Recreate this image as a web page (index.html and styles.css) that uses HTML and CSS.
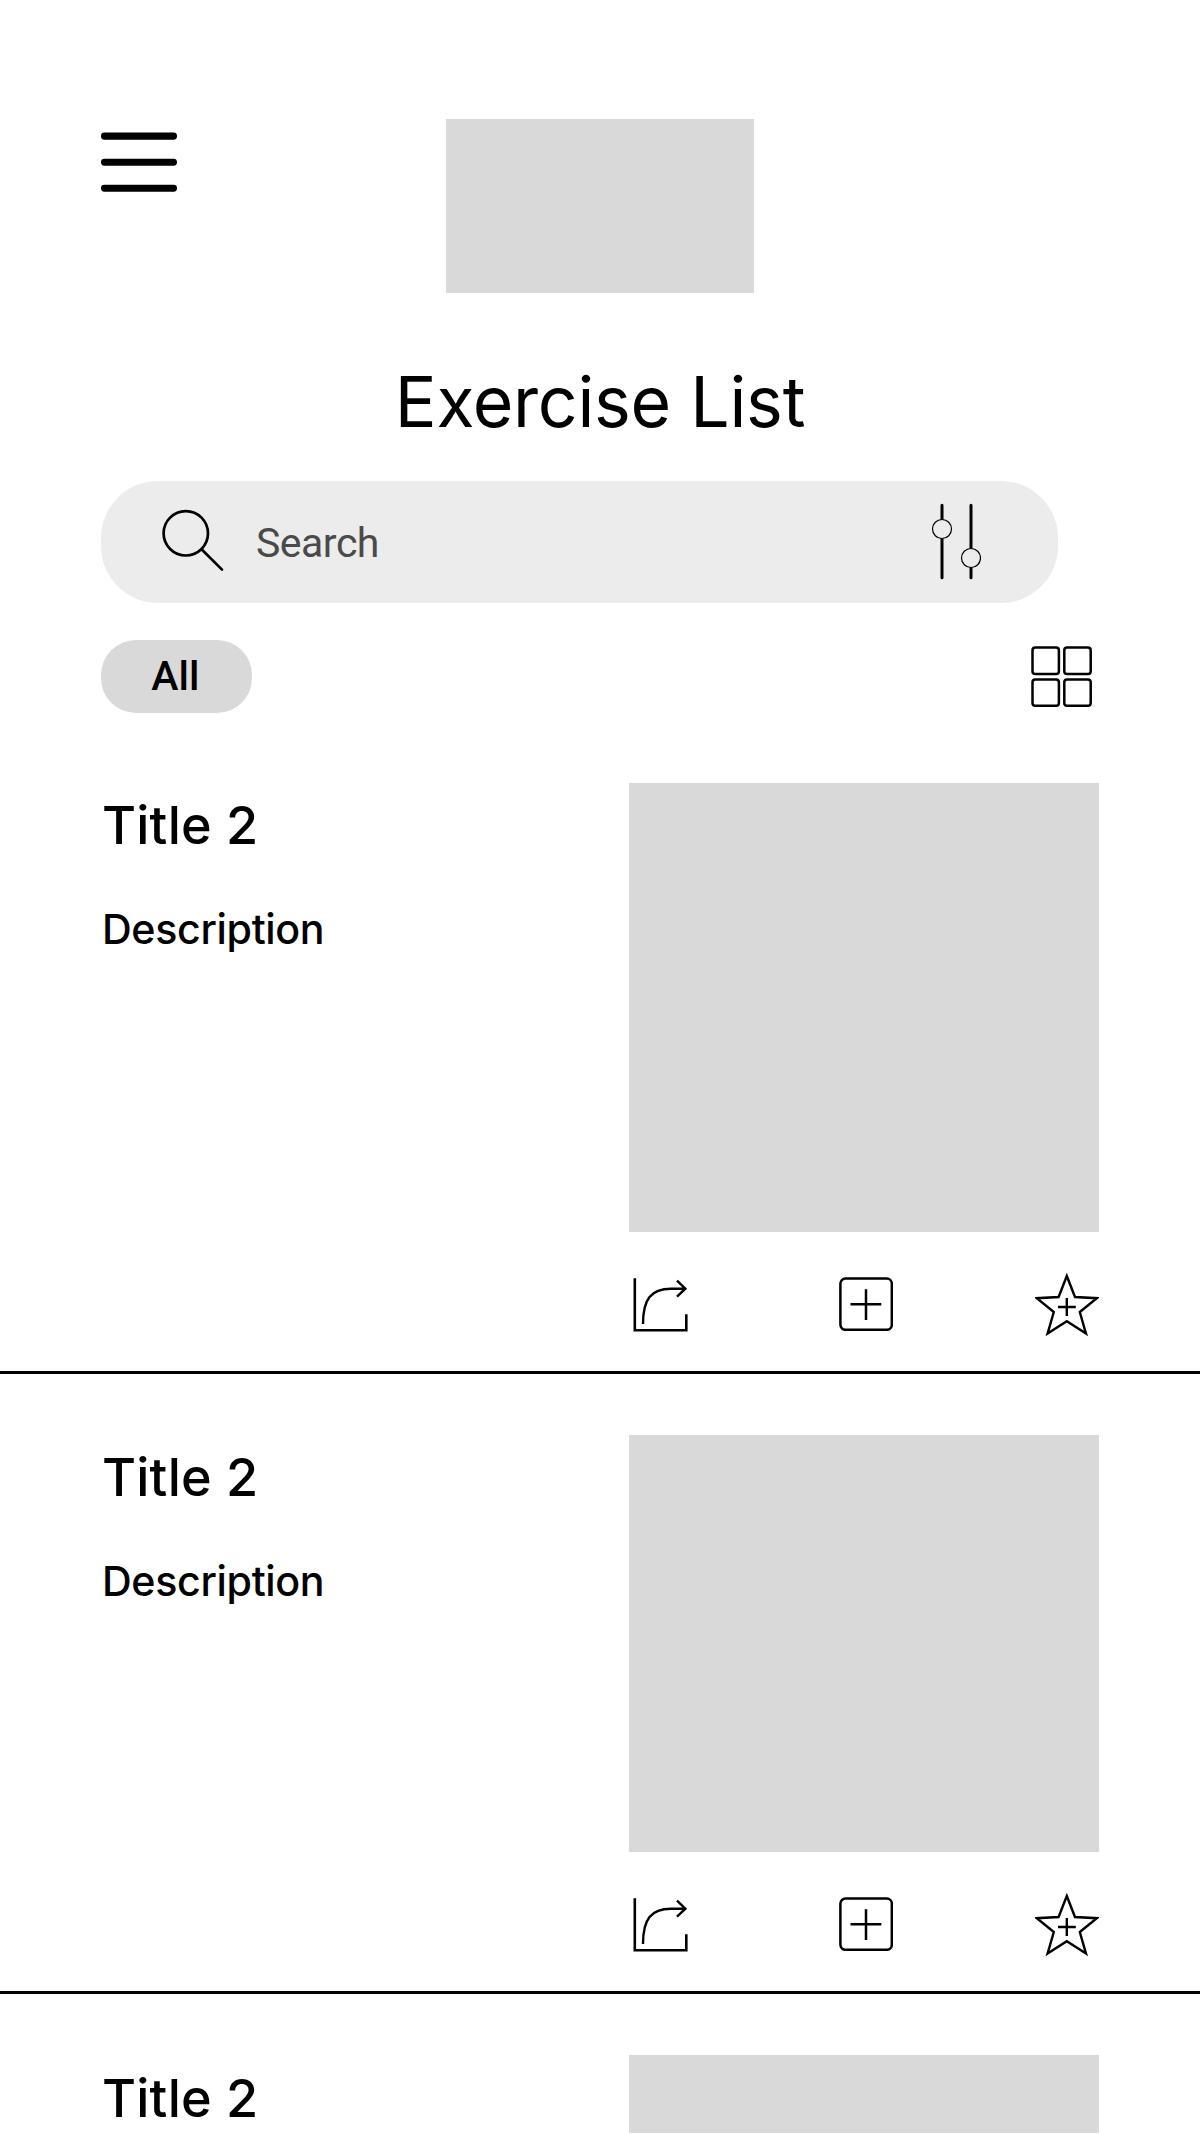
FILE: index.html
```html
<!DOCTYPE html>
<html lang="en">
<head>
<meta charset="utf-8">
<title>Exercise List</title>
<link rel="stylesheet" href="styles.css">
</head>
<body>
<svg class="sprite" aria-hidden="true">
  <symbol id="share" viewBox="0 0 56 56">
    <path d="M1.8 1.3V53.3H53.3V37.2" fill="none" stroke="#000" stroke-width="2.6"/>
    <path d="M10 47C10 22 18 11.7 38 11.7H52M44 3.7L52.4 11.7L44 19.7" fill="none" stroke="#000" stroke-width="2.4"/>
  </symbol>
  <symbol id="add" viewBox="0 0 54 54">
    <rect x="1.4" y="1.6" width="51.4" height="51.2" rx="5" fill="none" stroke="#000" stroke-width="2.5"/>
    <path d="M27 12.3V43M11.5 27.3H42.3" stroke="#000" stroke-width="2.5"/>
  </symbol>
  <symbol id="star" viewBox="0 0 64 64">
    <path d="M31.8 3L40 24L61.8 25.2L44.8 39L51 60.6L31.8 48.2L12.6 60.6L18.8 39L1.8 25.2L23.6 24Z" fill="none" stroke="#000" stroke-width="2.4"/>
    <path d="M31.8 25V43M23 34H40.8" stroke="#000" stroke-width="2.4"/>
  </symbol>
</svg>
<header class="header">
  <svg class="menu" viewBox="0 0 76 60">
    <rect y="0.5" width="76" height="7.2" rx="3.4"/><rect y="26.7" width="76" height="7" rx="3.4"/><rect y="52.7" width="76" height="7" rx="3.4"/>
  </svg>
  <div class="logo"></div>
</header>
<h1 class="heading">Exercise List</h1>
<div class="search">
  <svg class="glass" viewBox="0 0 62 64" fill="none" stroke="#000" stroke-width="2.7" stroke-linecap="round">
    <circle cx="23.8" cy="24.3" r="22.2"/><path d="M39.5 40.2L60 60.6"/>
  </svg>
  <span class="placeholder">Search</span>
  <svg class="sliders" viewBox="0 0 50 78" fill="#ececec" stroke="#000">
    <path d="M11 3.2V75.8M40 3.2V75.8" stroke-width="3" stroke-linecap="round"/>
    <circle cx="11" cy="27" r="9.5" stroke-width="1.2"/><circle cx="40" cy="56" r="9.5" stroke-width="1.2"/>
  </svg>
</div>
<div class="filters">
  <span class="chip">All</span>
  <svg class="grid" viewBox="0 0 62 62" fill="none" stroke="#000" stroke-width="2.5">
    <rect x="1.5" y="1.6" width="26.4" height="26.4" rx="2.8"/><rect x="33.3" y="1.6" width="26.4" height="26.4" rx="2.8"/>
    <rect x="1.5" y="33.4" width="26.4" height="26.4" rx="2.8"/><rect x="33.3" y="33.4" width="26.4" height="26.4" rx="2.8"/>
  </svg>
</div>
<main class="list">
  <article class="item">
    <div class="info"><h2 class="title">Title 2</h2><p class="desc">Description</p></div>
    <div class="media"><div class="thumb"></div>
      <div class="actions"><svg class="share"><use href="#share"/></svg><svg class="add"><use href="#add"/></svg><svg class="star"><use href="#star"/></svg></div></div>
  </article>
  <article class="item item-short">
    <div class="info"><h2 class="title">Title 2</h2><p class="desc">Description</p></div>
    <div class="media"><div class="thumb"></div>
      <div class="actions"><svg class="share"><use href="#share"/></svg><svg class="add"><use href="#add"/></svg><svg class="star"><use href="#star"/></svg></div></div>
  </article>
  <article class="item item-cut">
    <div class="info"><h2 class="title">Title 2</h2></div>
    <div class="media"><div class="thumb"></div></div>
  </article>
</main>
</body>
</html>
```
FILE: styles.css
```css
* { box-sizing: border-box; margin: 0; padding: 0; }
body { width: 1200px; height: 2134px; overflow: hidden; background: #fff; color: #000; font-family: Inter, sans-serif; }
svg { display: block; flex: none; }
.sprite { display: none; }
.header { display: grid; grid-template-columns: 345px 308px; padding: 119px 0 0 101px; height: 292.5px; }
.menu { width: 76px; height: 60px; margin-top: 13px; }
.logo { background: #d9d9d9; }
.heading { height: 188.5px; padding-top: 67.5px; text-align: center; font-size: 69.7px; line-height: 84px; font-weight: 400; letter-spacing: -0.25px; }
.search { display: flex; align-items: flex-start; width: 957px; height: 122px; margin-left: 101.2px; border-radius: 57px; background: #ececec; padding: 22px 78.2px 0 60.8px; }
.glass { width: 62px; height: 64px; margin-top: 6px; }
.placeholder { margin: 16px auto 0 32px; font: 400 41px/48px Roboto, sans-serif; letter-spacing: -0.5px; color: #4a4a4a; }
.sliders { width: 50px; height: 78px; margin-right: -1px; margin-top: -1px; }
.filters { display: flex; justify-content: space-between; height: 179px; padding: 37.4px 107px 0 101.3px; }
.chip { width: 150.7px; height: 72.3px; border-radius: 35px; background: #d9d9d9; padding-left: 50px; font: 500 41px/73px Roboto, sans-serif; }
.grid { width: 62px; height: 62px; margin-top: 5.2px; }
.item { display: flex; justify-content: space-between; height: 592px; padding: 0 101.5px 0 102px; border-bottom: 3px solid #000; }
.item + .item { padding-top: 60px; height: 620px; }
.title { font-size: 52.2px; line-height: 64px; font-weight: 500; margin-top: 11px; letter-spacing: 0.2px; }
.desc { font-size: 41.2px; line-height: 50px; font-weight: 500; margin-top: 47px; letter-spacing: -0.36px; }
.media { width: 469.5px; }
.thumb { height: 449.4px; margin-top: 0.6px; background: #d9d9d9; }
.item-short .thumb { height: 417.4px; }
.item-cut .thumb { height: 78px; margin-top: 0; }
.item.item-cut { height: 140px; border: 0; padding-top: 61px; }
.actions { display: flex; align-items: flex-start; padding-top: 41px; }
.share { width: 56px; height: 56px; margin: 4px 0 0 4px; }
.add { width: 54px; height: 54px; margin: 4px 0 0 150.4px; }
.star { width: 64px; height: 64px; margin-left: 141.4px; }
```
